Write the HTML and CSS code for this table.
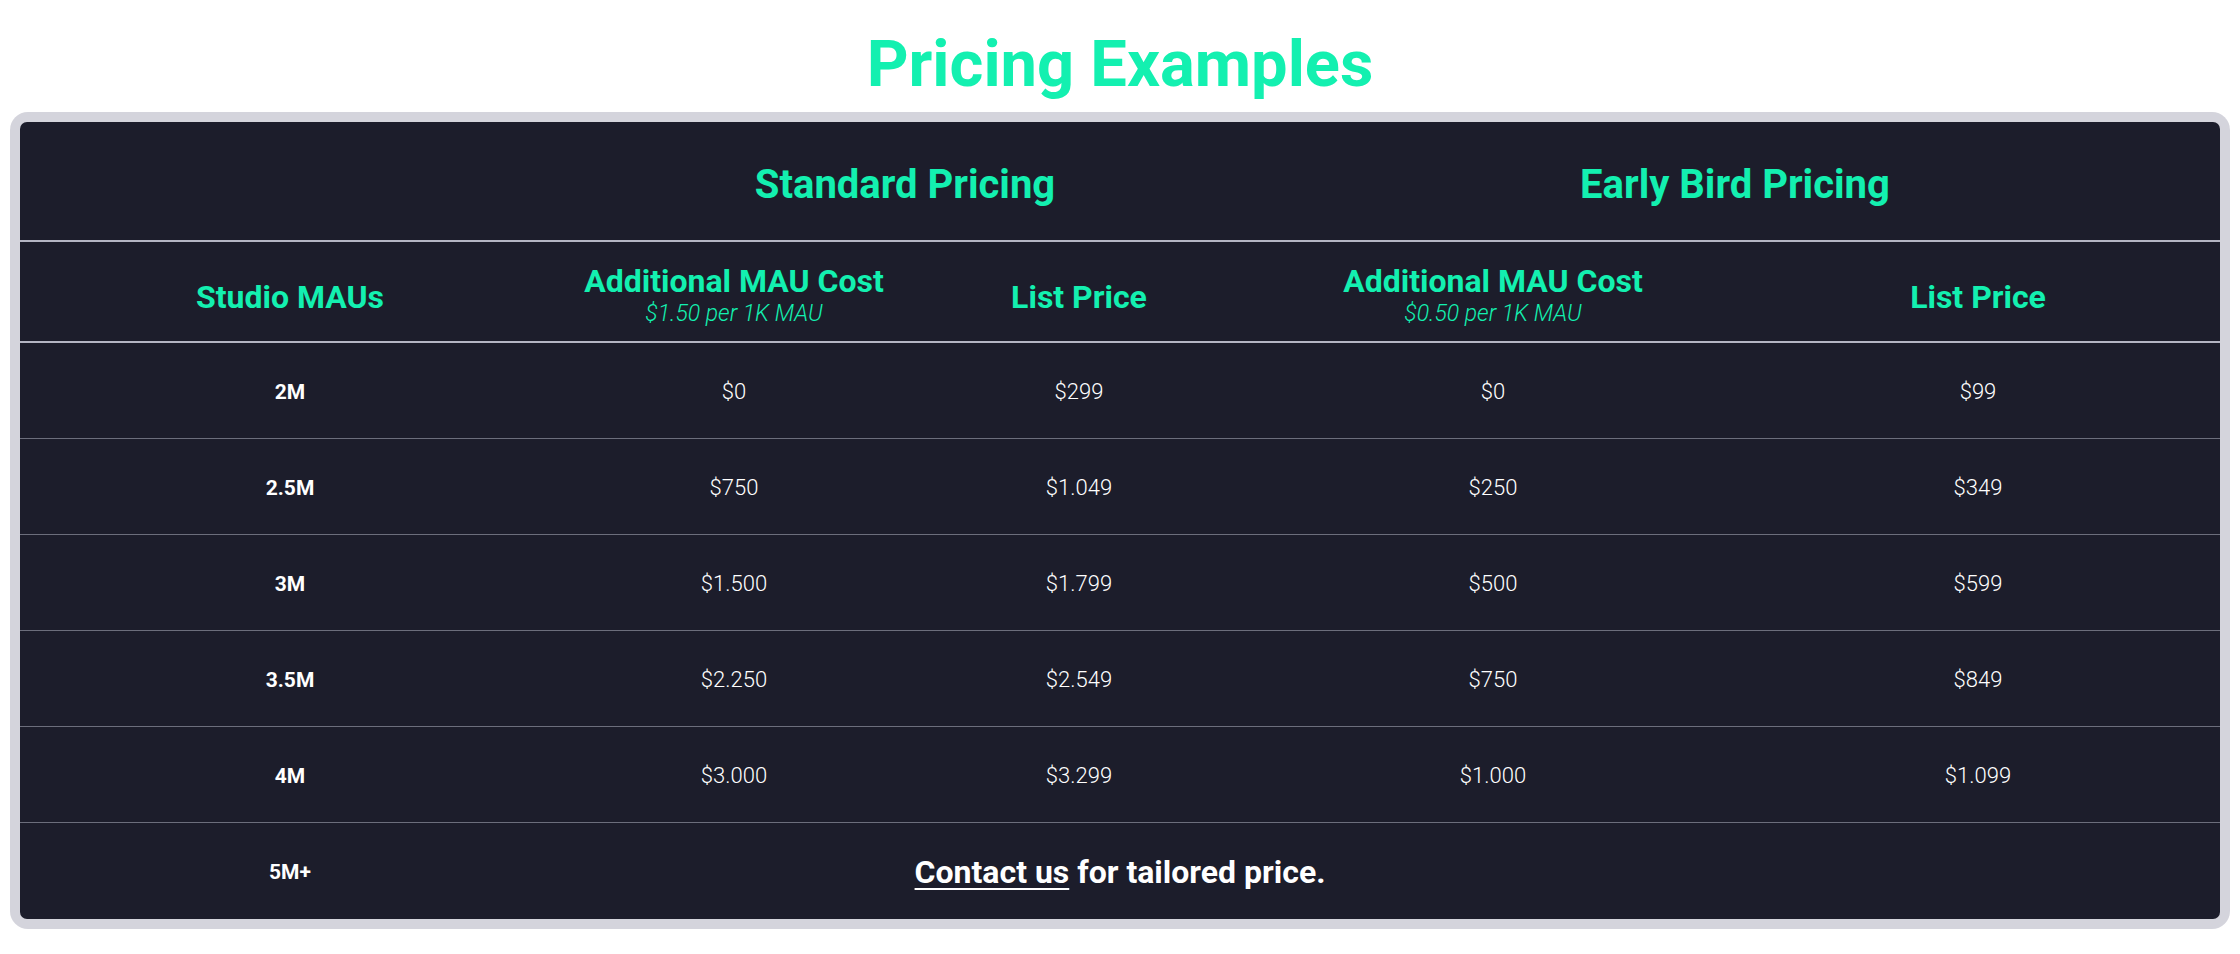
FILE: index.html
```html
<!DOCTYPE html>
<html lang="en">
<head>
<meta charset="utf-8">
<title>Pricing Examples</title>
<link rel="stylesheet" href="styles.css">
</head>
<body>
<main class="page">
  <h1 class="title">Pricing Examples</h1>
  <div class="frame">
    <div class="panel">
      <table class="pricing">
        <colgroup>
          <col class="c1"><col class="c2"><col class="c3"><col class="c4"><col class="c5">
        </colgroup>
        <thead>
          <tr class="group-row">
            <th></th>
            <th colspan="2" class="group">Standard Pricing</th>
            <th colspan="2" class="group">Early Bird Pricing</th>
          </tr>
          <tr class="head-row">
            <th class="head">Studio MAUs</th>
            <th class="head">Additional MAU Cost<span class="sub">$1.50 per 1K MAU</span></th>
            <th class="head">List Price</th>
            <th class="head">Additional MAU Cost<span class="sub">$0.50 per 1K MAU</span></th>
            <th class="head">List Price</th>
          </tr>
        </thead>
        <tbody>
          <tr><td class="mau">2M</td><td>$0</td><td>$299</td><td>$0</td><td>$99</td></tr>
          <tr><td class="mau">2.5M</td><td>$750</td><td>$1.049</td><td>$250</td><td>$349</td></tr>
          <tr><td class="mau">3M</td><td>$1.500</td><td>$1.799</td><td>$500</td><td>$599</td></tr>
          <tr><td class="mau">3.5M</td><td>$2.250</td><td>$2.549</td><td>$750</td><td>$849</td></tr>
          <tr><td class="mau">4M</td><td>$3.000</td><td>$3.299</td><td>$1.000</td><td>$1.099</td></tr>
          <tr class="last-row"><td class="mau">5M+</td><td colspan="4" class="contact"><a href="#" class="link">Contact us</a> for tailored price.</td></tr>
        </tbody>
      </table>
    </div>
  </div>
</main>
</body>
</html>
```
FILE: styles.css
```css
html, body {
  margin: 0;
  padding: 0;
  background: #ffffff;
}
body {
  font-family: Roboto, "Liberation Sans", sans-serif;
}
.page {
  padding: 0 10px;
}
.title {
  margin: 0;
  padding-top: 32px;
  height: 112px;
  box-sizing: border-box;
  text-align: center;
  font-size: 65px;
  line-height: 64px;
  font-weight: 700;
  color: #13f0b0;
}
.frame {
  background: #d4d4dc;
  border-radius: 18px;
  padding: 10px;
}
.panel {
  background: #1c1d2b;
  border-radius: 7px;
  overflow: hidden;
}
.pricing {
  width: 100%;
  table-layout: fixed;
  border-collapse: collapse;
  color: #ffffff;
}
.c1 { width: 540px; }
.c2 { width: 348px; }
.c3 { width: 342px; }
.c4 { width: 486px; }
.c5 { width: 484px; }
.pricing th,
.pricing td {
  padding: 0;
  text-align: center;
  vertical-align: middle;
}
.group-row {
  height: 119px;
  border-bottom: 2px solid #b4b5c3;
}
.pricing th.group {
  font-size: 40px;
  font-weight: 700;
  color: #13f0b0;
  padding-top: 7px;
}
.head-row {
  height: 101px;
  border-bottom: 2px solid #b4b5c3;
}
.pricing th.head {
  font-size: 32px;
  font-weight: 700;
  color: #13f0b0;
  line-height: 34px;
  padding-top: 10px;
}
.sub {
  display: block;
  font-size: 23px;
  line-height: 31px;
  font-weight: 300;
  font-style: italic;
}
.pricing tbody tr {
  height: 96px;
  border-top: 1px solid #6c6e7c;
}
.pricing tbody tr:first-child {
  border-top: none;
}
.pricing tbody tr.last-row {
  height: 97px;
}
.pricing td {
  font-size: 22px;
  font-weight: 300;
  padding-top: 3px;
}
.pricing td.mau {
  font-weight: 700;
  font-size: 21px;
}
.pricing td.contact {
  font-size: 32px;
  font-weight: 700;
  padding-right: 540px;
}
.link {
  color: #ffffff;
  text-decoration: underline;
  text-decoration-thickness: 2px;
  text-underline-offset: 5px;
}
```
